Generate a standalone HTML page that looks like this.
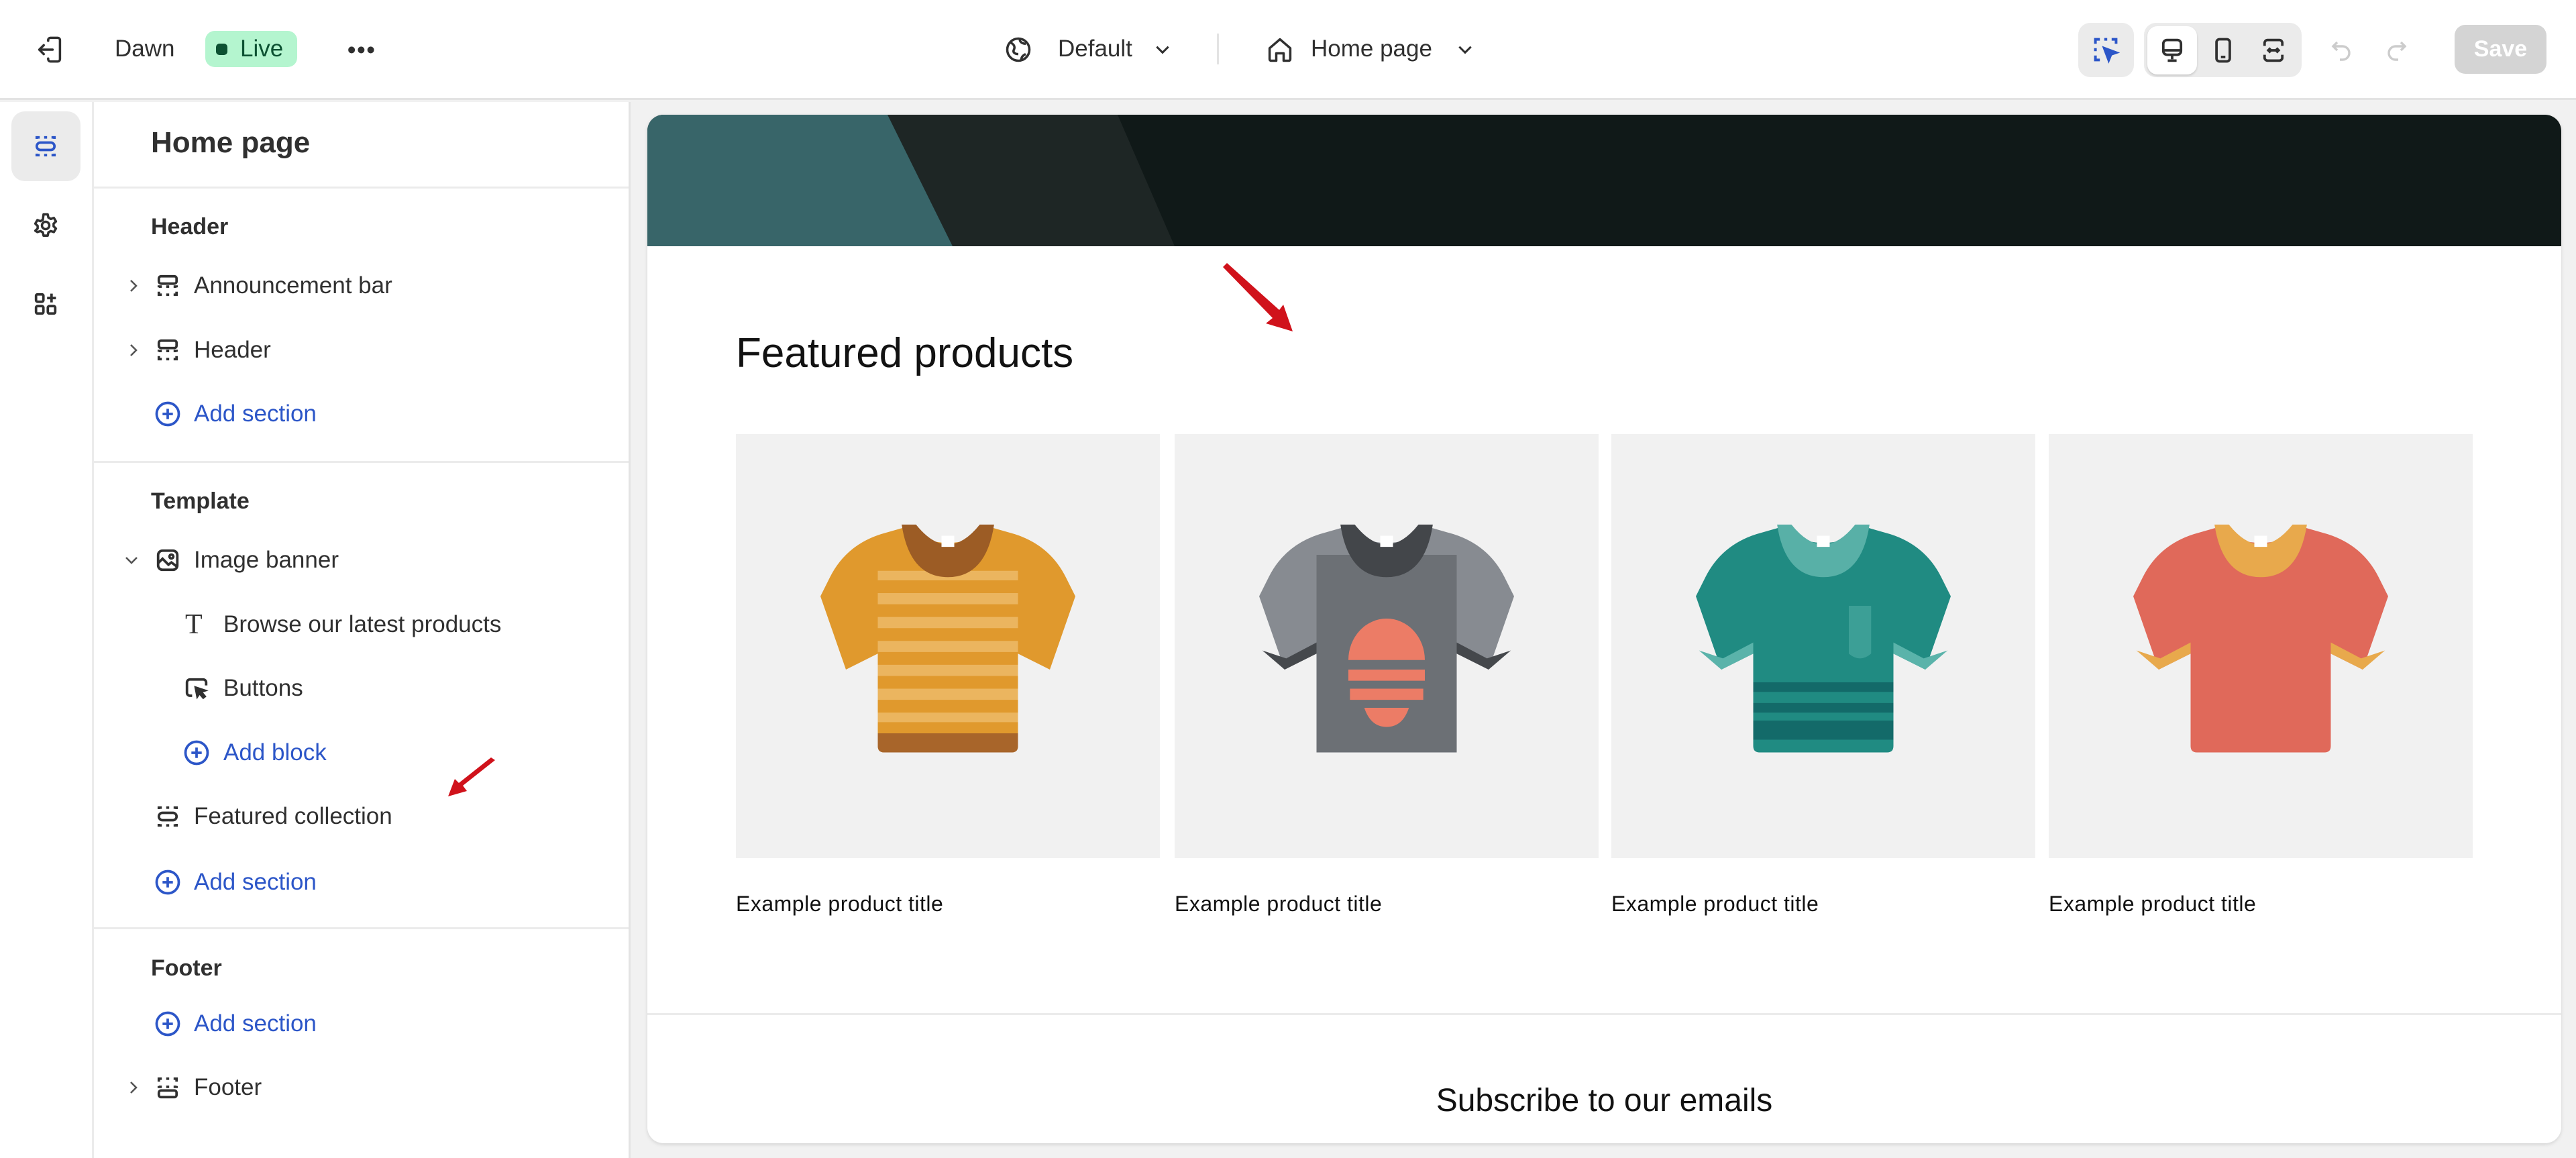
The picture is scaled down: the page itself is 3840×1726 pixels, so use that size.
<!DOCTYPE html>
<html><head><meta charset="utf-8"><style>
*{margin:0;padding:0;box-sizing:border-box}
body{width:3840px;height:1726px;overflow:hidden;background:#f1f1f1;font-family:"Liberation Sans",sans-serif;color:#303030;position:relative}
.a{position:absolute}
.t{position:absolute;font-size:35px;line-height:44px;white-space:nowrap}
.b{font-weight:bold}
.blue{color:#2c56c8}
svg{display:block}
</style></head><body>
<svg width="0" height="0" style="position:absolute"><defs>
<path id="sh" d="M52 3L38 7Q16 14 6 34L0 46L16 92L36 82V140Q36 144 40 144H120Q124 144 124 140V82L144 92L160 46L154 34Q144 14 122 7L108 3Q80 22 52 3Z"/>
<path id="cf" d="M2 80L16 92L36 82L36 75L17 85Z M158 80L144 92L124 82L124 75L143 85Z"/>
<path id="cl" d="M51 1L60 1Q80 26 100 1L109 1Q104 34 80 34Q56 34 51 1Z"/>
</defs></svg>
<!-- top bar -->
<div class="a" style="left:0;top:0;width:3840px;height:149px;background:#fff;border-bottom:3px solid #e3e3e3"></div>
<svg class="a" style="left:52px;top:52px" width="44" height="44" viewBox="0 0 20 20" fill="none" stroke="#303030" stroke-width="1.6" stroke-linecap="round" stroke-linejoin="round"><path d="M9 4V3.5A1.5 1.5 0 0 1 10.5 2h5A1.5 1.5 0 0 1 17 3.5v13a1.5 1.5 0 0 1-1.5 1.5h-5A1.5 1.5 0 0 1 9 16.5V16M12 10H3M6 7l-3 3 3 3"/></svg>
<div class="t" style="left:171px;top:51px">Dawn</div>
<div class="a" style="left:306px;top:46px;width:137px;height:54px;border-radius:14px;background:#b4f5cf"></div>
<div class="a" style="left:322px;top:65px;width:17px;height:17px;border-radius:5px;background:#0c5132"></div>
<div class="t" style="left:358px;top:51px;color:#0c5132">Live</div>
<div class="t b" style="left:518px;top:53px;letter-spacing:2px">•••</div>
<svg class="a" style="left:1496px;top:52px" width="44" height="44" viewBox="0 0 20 20" fill="none" stroke="#303030" stroke-width="1.6"><circle cx="10" cy="10" r="7.5"/><path d="M4 5c3 1 4 3 3 5s1 3 3 3M11 3c0 2 2 3 4 3M12 17c0-2 1-3 3-4"/></svg>
<div class="t" style="left:1577px;top:51px">Default</div>
<svg class="a" style="left:1720px;top:63px" width="26" height="22" viewBox="0 0 12 10" fill="none" stroke="#303030" stroke-width="1.4"><path d="M2 3l4 4 4-4"/></svg>
<div class="a" style="left:1814px;top:50px;width:3px;height:46px;background:#e3e3e3"></div>
<svg class="a" style="left:1886px;top:52px" width="44" height="44" viewBox="0 0 20 20" fill="none" stroke="#303030" stroke-width="1.6" stroke-linejoin="round"><path d="M3 9l7-6 7 6v7.5a1 1 0 0 1-1 1h-3.5v-5h-5v5H4a1 1 0 0 1-1-1z"/></svg>
<div class="t" style="left:1954px;top:51px">Home page</div>
<svg class="a" style="left:2171px;top:63px" width="26" height="22" viewBox="0 0 12 10" fill="none" stroke="#303030" stroke-width="1.4"><path d="M2 3l4 4 4-4"/></svg>
<!-- right tools -->
<div class="a" style="left:3098px;top:34px;width:83px;height:81px;border-radius:18px;background:#ebebeb"></div>
<svg class="a" style="left:3117px;top:52px" width="44" height="44" viewBox="0 0 20 20" fill="none" stroke="#2c56c8" stroke-width="1.8"><path d="M3 6V3h3M9 3h2M14 3h3v3M3 9v2M3 14v3h3"/><path d="M9 9l8 3-3.5 1.2L12 17z" fill="#2c56c8"/></svg>
<div class="a" style="left:3196px;top:34px;width:235px;height:81px;border-radius:18px;background:#ebebeb"></div>
<div class="a" style="left:3201px;top:39px;width:74px;height:72px;border-radius:15px;background:#fff;box-shadow:0 2px 3px rgba(0,0,0,.15)"></div>
<svg class="a" style="left:3216px;top:53px" width="44" height="44" viewBox="0 0 20 20" fill="none" stroke="#303030" stroke-width="1.7" stroke-linejoin="round"><rect x="4" y="3" width="12" height="10" rx="2.5"/><path d="M4 10h12M10 13v3M7 17h6"/></svg>
<svg class="a" style="left:3292px;top:53px" width="44" height="44" viewBox="0 0 20 20" fill="none" stroke="#303030" stroke-width="1.7"><rect x="5.5" y="2.5" width="9" height="15" rx="2"/><path d="M8.5 14.5h3"/></svg>
<svg class="a" style="left:3367px;top:53px" width="44" height="44" viewBox="0 0 20 20" fill="none" stroke="#303030" stroke-width="1.7"><path d="M4 7V5a2 2 0 0 1 2-2h8a2 2 0 0 1 2 2v2M4 13v2a2 2 0 0 0 2 2h8a2 2 0 0 0 2-2v-2M7 10h6M8 8.5L6.5 10 8 11.5M12 8.5l1.5 1.5-1.5 1.5"/></svg>
<svg class="a" style="left:3470px;top:55px" width="40" height="40" viewBox="0 0 20 20" fill="none" stroke="#cccccc" stroke-width="1.7"><path d="M7 4L4 7l3 3M4 7h7a5 5 0 0 1 0 10H9"/></svg>
<svg class="a" style="left:3553px;top:55px" width="40" height="40" viewBox="0 0 20 20" fill="none" stroke="#cccccc" stroke-width="1.7"><path d="M13 4l3 3-3 3M16 7H9a5 5 0 0 0 0 10h2"/></svg>
<div class="a" style="left:3659px;top:37px;width:137px;height:73px;border-radius:16px;background:#d4d4d4;color:#fff;font-size:34px;font-weight:bold;line-height:73px;text-align:center">Save</div>

<!-- left rail -->
<div class="a" style="left:0;top:152px;width:140px;height:1574px;background:#fff;border-right:3px solid #ebebeb"></div>
<div class="a" style="left:17px;top:166px;width:103px;height:104px;border-radius:20px;background:#ebebeb"></div>
<svg class="a" style="left:46px;top:196px" width="44" height="44" viewBox="0 0 20 20" fill="none" stroke="#2c56c8" stroke-width="1.7"><path d="M4 5V4h2M9 4h2M14 4h2v1M4 15v1h2M9 16h2M14 16h2v-1"/><rect x="4" y="7.5" width="12" height="5" rx="2.5"/></svg>
<svg class="a" style="left:46px;top:314px" width="44" height="44" viewBox="0 0 20 20" fill="none" stroke="#303030" stroke-width="1.6" stroke-linejoin="round"><circle cx="10" cy="10" r="2.5"/><path d="M8.6 2.5h2.8l.5 2.2 1.6.9 2.1-.7 1.4 2.4-1.6 1.5v1.8l1.6 1.5-1.4 2.4-2.1-.7-1.6.9-.5 2.2H8.6l-.5-2.2-1.6-.9-2.1.7L3 13.6l1.6-1.5v-1.8L3 8.8l1.4-2.4 2.1.7 1.6-.9z"/></svg>
<svg class="a" style="left:46px;top:431px" width="44" height="44" viewBox="0 0 20 20" fill="none" stroke="#303030" stroke-width="1.7"><rect x="3.5" y="3.5" width="5" height="5" rx="1"/><rect x="3.5" y="11.5" width="5" height="5" rx="1"/><rect x="11.5" y="11.5" width="5" height="5" rx="1"/><path d="M14 3v6M11 6h6"/></svg>

<!-- sidebar -->
<div class="a" style="left:140px;top:152px;width:800px;height:1574px;background:#fff;border-right:3px solid #e3e3e3"></div>
<div class="t b" style="left:225px;top:187px;font-size:44px;line-height:52px">Home page</div>
<div class="a" style="left:140px;top:278px;width:797px;height:3px;background:#ebebeb"></div>
<div class="t b" style="left:225px;top:316px;font-size:34px">Header</div>

<svg class="a" style="left:188px;top:414px" width="22" height="24" viewBox="0 0 10 12" fill="none" stroke="#555" stroke-width="1.3"><path d="M3 2l4 4-4 4"/></svg>
<svg class="a" style="left:228px;top:404px" width="44" height="44" viewBox="0 0 20 20" fill="none" stroke="#303030" stroke-width="1.7"><rect x="4" y="3.5" width="12" height="5" rx="1.5"/><path d="M4 11v-.5h2M9 10.5h2M14 10.5h2v.5M4 14v2h2M9 16h2M14 16h2v-2"/></svg>
<div class="t" style="left:289px;top:404px">Announcement bar</div>

<svg class="a" style="left:188px;top:510px" width="22" height="24" viewBox="0 0 10 12" fill="none" stroke="#555" stroke-width="1.3"><path d="M3 2l4 4-4 4"/></svg>
<svg class="a" style="left:228px;top:500px" width="44" height="44" viewBox="0 0 20 20" fill="none" stroke="#303030" stroke-width="1.7"><rect x="4" y="3.5" width="12" height="5" rx="1.5"/><path d="M4 11v-.5h2M9 10.5h2M14 10.5h2v.5M4 14v2h2M9 16h2M14 16h2v-2"/></svg>
<div class="t" style="left:289px;top:500px">Header</div>

<svg class="a" style="left:228px;top:595px" width="44" height="44" viewBox="0 0 20 20" fill="none" stroke="#2c56c8" stroke-width="1.7"><circle cx="10" cy="10" r="7.5"/><path d="M10 6.5v7M6.5 10h7"/></svg>
<div class="t blue" style="left:289px;top:595px">Add section</div>

<div class="a" style="left:140px;top:687px;width:797px;height:3px;background:#ebebeb"></div>
<div class="t b" style="left:225px;top:725px;font-size:34px">Template</div>

<svg class="a" style="left:184px;top:824px" width="24" height="22" viewBox="0 0 12 10" fill="none" stroke="#555" stroke-width="1.3"><path d="M2 3l4 4 4-4"/></svg>
<svg class="a" style="left:228px;top:813px" width="44" height="44" viewBox="0 0 20 20" fill="none" stroke="#303030" stroke-width="1.7"><rect x="3.5" y="3.5" width="13" height="13" rx="3"/><circle cx="12.5" cy="7.5" r="1.3"/><path d="M3.5 12l3-3 4 4 2-1.5 4 3"/></svg>
<div class="t" style="left:289px;top:813px">Image banner</div>

<div class="t" style="left:276px;top:907px;font-family:'Liberation Serif',serif;font-size:42px;line-height:48px">T</div>
<div class="t" style="left:333px;top:909px">Browse our latest products</div>

<svg class="a" style="left:271px;top:1004px" width="44" height="44" viewBox="0 0 20 20" fill="none" stroke="#303030" stroke-width="1.7"><path d="M7 15H5.5a2 2 0 0 1-2-2V6a2 2 0 0 1 2-2h9a2 2 0 0 1 2 2v2"/><path d="M9 9l7.5 2.5-3 1 2.5 3-1.5 1.2-2.5-3-1.6 2.5z" fill="#303030" stroke-width="1"/></svg>
<div class="t" style="left:333px;top:1004px">Buttons</div>

<svg class="a" style="left:271px;top:1100px" width="44" height="44" viewBox="0 0 20 20" fill="none" stroke="#2c56c8" stroke-width="1.7"><circle cx="10" cy="10" r="7.5"/><path d="M10 6.5v7M6.5 10h7"/></svg>
<div class="t blue" style="left:333px;top:1100px">Add block</div>

<svg class="a" style="left:228px;top:1195px" width="44" height="44" viewBox="0 0 20 20" fill="none" stroke="#303030" stroke-width="1.7"><path d="M4 5V4h2M9 4h2M14 4h2v1M4 15v1h2M9 16h2M14 16h2v-1"/><rect x="4" y="7.5" width="12" height="5" rx="2.5"/></svg>
<div class="t" style="left:289px;top:1195px">Featured collection</div>

<svg class="a" style="left:228px;top:1293px" width="44" height="44" viewBox="0 0 20 20" fill="none" stroke="#2c56c8" stroke-width="1.7"><circle cx="10" cy="10" r="7.5"/><path d="M10 6.5v7M6.5 10h7"/></svg>
<div class="t blue" style="left:289px;top:1293px">Add section</div>

<div class="a" style="left:140px;top:1382px;width:797px;height:3px;background:#ebebeb"></div>
<div class="t b" style="left:225px;top:1421px;font-size:34px">Footer</div>

<svg class="a" style="left:228px;top:1504px" width="44" height="44" viewBox="0 0 20 20" fill="none" stroke="#2c56c8" stroke-width="1.7"><circle cx="10" cy="10" r="7.5"/><path d="M10 6.5v7M6.5 10h7"/></svg>
<div class="t blue" style="left:289px;top:1504px">Add section</div>

<svg class="a" style="left:188px;top:1609px" width="22" height="24" viewBox="0 0 10 12" fill="none" stroke="#555" stroke-width="1.3"><path d="M3 2l4 4-4 4"/></svg>
<svg class="a" style="left:228px;top:1599px" width="44" height="44" viewBox="0 0 20 20" fill="none" stroke="#303030" stroke-width="1.7"><path d="M4 6V4h2M9 4h2M14 4h2v2M4 9v.5h2M9 9.5h2M14 9.5h2V9"/><rect x="4" y="12" width="12" height="4.5" rx="1.5"/></svg>
<div class="t" style="left:289px;top:1599px">Footer</div>

<svg class="a" style="left:660px;top:1125px" width="90" height="70" viewBox="0 0 90 70"><path d="M78 8 L30 46 L36 54 L8 62 L18 36 L24 42 L72 4 Z" fill="#d0121b"/></svg>

<!-- preview card -->
<div class="a" style="left:965px;top:171px;width:2853px;height:1533px;background:#fff;border-radius:24px;overflow:hidden;box-shadow:0 2px 6px rgba(0,0,0,.12)">
  <div class="a" style="left:0;top:0;width:2853px;height:196px;background:#101918"></div>
  <svg class="a" style="left:0;top:0" width="900" height="196"><polygon points="358,0 701,0 786,196 455,196" fill="#1e2625"/><polygon points="0,0 358,0 455,196 0,196" fill="#386569"/></svg>
  <div class="a" style="left:132px;top:320px;font-size:62px;line-height:72px;color:#121212">Featured products</div>

  <div class="a" style="left:132px;top:476px;width:632px;height:632px;background:#f1f1f1">
    <svg class="a" style="left:126px;top:132px" width="380" height="343" viewBox="0 0 160 144">
      <use href="#sh" fill="#e0992d"/>
      <g fill="#ebb55f"><rect x="36" y="30" width="88" height="6"/><rect x="36" y="44" width="88" height="7"/><rect x="36" y="59" width="88" height="7"/><rect x="36" y="74" width="88" height="7"/><rect x="36" y="89" width="88" height="7"/><rect x="36" y="104" width="88" height="7"/><rect x="36" y="119" width="88" height="6"/></g>
      <path d="M36 132H124V140Q124 144 120 144H40Q36 144 36 140Z" fill="#a8652a"/>
      <use href="#cl" fill="#9c5c25"/>
      <rect x="76" y="8" width="8" height="7" fill="#fff"/>
    </svg>
  </div>
  <div class="a" style="left:132px;top:1158px;font-size:32px;line-height:36px;color:#121212;letter-spacing:.5px">Example product title</div>

  <div class="a" style="left:786px;top:476px;width:632px;height:632px;background:#f1f1f1">
    <svg class="a" style="left:126px;top:132px" width="380" height="343" viewBox="0 0 160 144">
      <use href="#sh" fill="#878b91"/>
      <rect x="36" y="20" width="88" height="124" fill="#6c7075"/>
      <use href="#cf" fill="#45484c"/>
      <use href="#cl" fill="#43464a"/>
      <rect x="76" y="8" width="8" height="7" fill="#fff"/>
      <path d="M56 86A24 26 0 0 1 104 86Z" fill="#ec7c66"/>
      <rect x="56" y="92" width="48" height="7" fill="#ec7c66"/><rect x="57" y="104" width="46" height="7" fill="#ec7c66"/>
      <path d="M66 116H94Q90 128 80 128Q70 128 66 116Z" fill="#ec7c66"/>
    </svg>
  </div>
  <div class="a" style="left:786px;top:1158px;font-size:32px;line-height:36px;color:#121212;letter-spacing:.5px">Example product title</div>

  <div class="a" style="left:1437px;top:476px;width:632px;height:632px;background:#f1f1f1">
    <svg class="a" style="left:126px;top:132px" width="380" height="343" viewBox="0 0 160 144">
      <use href="#sh" fill="#208b82"/>
      <use href="#cf" fill="#5ab3aa"/>
      <path d="M96 52H110V82Q103 88 96 82Z" fill="#3c9f96"/>
      <g fill="#136a69"><rect x="36" y="100" width="88" height="6"/><rect x="36" y="113" width="88" height="6"/><rect x="36" y="124" width="88" height="12"/></g>
      <use href="#cl" fill="#58b0a7"/>
      <rect x="76" y="8" width="8" height="7" fill="#fff"/>
    </svg>
  </div>
  <div class="a" style="left:1437px;top:1158px;font-size:32px;line-height:36px;color:#121212;letter-spacing:.5px">Example product title</div>

  <div class="a" style="left:2089px;top:476px;width:632px;height:632px;background:#f1f1f1">
    <svg class="a" style="left:126px;top:132px" width="380" height="343" viewBox="0 0 160 144">
      <use href="#sh" fill="#e0695a"/>
      <use href="#cf" fill="#e8a94c"/>
      <use href="#cl" fill="#e8a94c"/>
      <rect x="76" y="8" width="8" height="7" fill="#fff"/>
    </svg>
  </div>
  <div class="a" style="left:2089px;top:1158px;font-size:32px;line-height:36px;color:#121212;letter-spacing:.5px">Example product title</div>

  <div class="a" style="left:0;top:1339px;width:2853px;height:3px;background:#ebebeb"></div>
  <div class="a" style="left:0;top:1442px;width:2853px;text-align:center;font-size:48px;line-height:56px;color:#121212">Subscribe to our emails</div>
</div>

<svg class="a" style="left:1815px;top:390px" width="125" height="115" viewBox="0 0 125 115"><path d="M8 8 L14 2 L92 72 L98 64 L112 104 L72 92 L82 84 Z" fill="#d0121b"/></svg>
</body></html>
